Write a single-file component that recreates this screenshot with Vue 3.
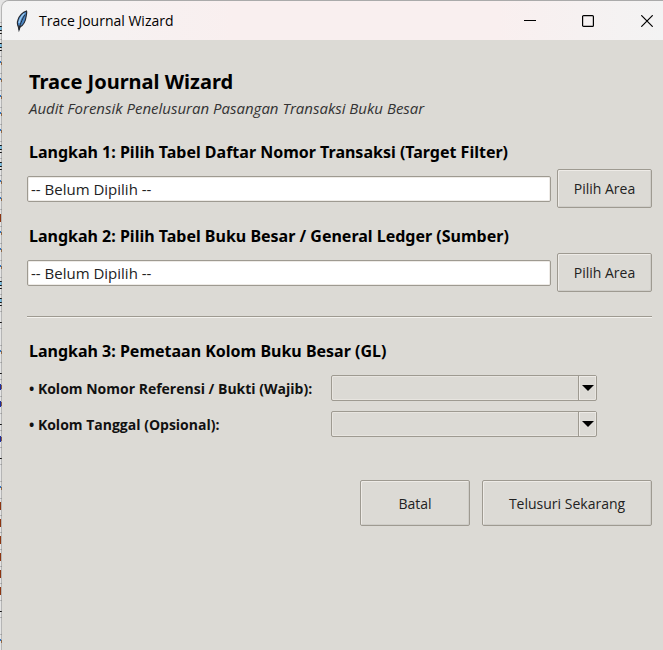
<script setup>
import { ref } from 'vue'

const sources = ref([
  { id: 'target', title: 'Langkah 1: Pilih Tabel Daftar Nomor Transaksi (Target Filter)', value: '-- Belum Dipilih --' },
  { id: 'ledger', title: 'Langkah 2: Pilih Tabel Buku Besar / General Ledger (Sumber)', value: '-- Belum Dipilih --' },
])

const columns = ref([
  { id: 'reference', label: '• Kolom Nomor Referensi / Bukti (Wajib):', value: '' },
  { id: 'date', label: '• Kolom Tanggal (Opsional):', value: '' },
])

// Edge of the sheet that shows behind the window
const gridLines = Array.from({ length: 37 }, (_, i) => 22 + i * 17)
const bars = [26, 43, 145, 162, 281, 298]
const hooks = [61, 78, 95, 112, 129, 180, 197, 231, 248, 265, 350, 486, 639]
const rings = [384, 401, 436]
const dashes = [322, 373, 424, 458, 611]
const reds = [214, 502, 519, 536, 553, 570, 587]
</script>

<template>
  <div class="desktop">
    <svg class="sheet" width="2" height="650" aria-hidden="true">
      <rect v-for="y in gridLines" :key="'g' + y" x="0" :y="y" width="2" height="1" fill="#b9b9b9" />
      <g v-for="y in bars" :key="'b' + y">
        <rect x="0" :y="y" width="2" height="1" fill="#111" />
        <rect x="0" :y="y + 1" width="2" height="3" fill="#7cc4ea" />
        <rect x="0" :y="y + 4" width="2" height="1" fill="#111" />
        <rect x="0" :y="y + 7" width="2" height="1" fill="#111" />
      </g>
      <g v-for="y in hooks" :key="'h' + y">
        <rect x="0" :y="y" width="1" height="2" fill="#2f75c0" />
        <rect x="1" :y="y + 1" width="1" height="3" fill="#a8642a" />
      </g>
      <g v-for="y in rings" :key="'r' + y">
        <rect x="0" :y="y" width="1" height="6" fill="#1e2fa0" />
        <rect x="1" :y="y + 1" width="1" height="4" fill="#8a4a30" />
      </g>
      <rect v-for="y in dashes" :key="'d' + y" x="0" :y="y" width="2" height="1" fill="#111" />
      <rect v-for="y in reds" :key="'k' + y" x="0" :y="y" width="1" height="8" fill="#8d3510" />
    </svg>

    <main class="window">
      <header class="titlebar">
        <svg class="feather" width="14" height="22" viewBox="0 0 14 22" aria-hidden="true">
          <path d="M11.500 1C8 2 3.800 6 2.800 10.500C2 13 2.400 15 3.400 17L4 20L5 17C9 15 10.700 10 11.200 6C11.500 4 12 2.500 11.500 1Z" fill="#4a86c5" stroke="#262b33" stroke-width="1.200" />
          <path d="M9.500 3.500C6.500 6 4.800 9 4 13" fill="none" stroke="#9fcdf2" stroke-width="1.500" />
          <path d="M10 4.500C8 8 5.500 12 4.200 19.500" fill="none" stroke="#1d2632" stroke-width="1" />
          <path d="M3.500 15L4 20L5.500 16.500Z" fill="#2a2a2a" />
        </svg>
        <span class="caption">Trace Journal Wizard</span>
        <div class="controls">
          <button type="button" aria-label="Minimize">
            <svg width="12" height="12" viewBox="0 0 12 12"><path d="M0 5.500H12" /></svg>
          </button>
          <button type="button" aria-label="Maximize">
            <svg width="12" height="12" viewBox="0 0 12 12"><rect x=".6" y=".6" width="10.800" height="10.800" rx="1" /></svg>
          </button>
          <button type="button" aria-label="Close">
            <svg width="12" height="12" viewBox="0 0 12 12"><path d="M.3 .3L11.700 11.700M11.700 .3L.3 11.700" /></svg>
          </button>
        </div>
      </header>

      <form class="content" @submit.prevent>
        <h1>Trace Journal Wizard</h1>
        <p class="subtitle">Audit Forensik Penelusuran Pasangan Transaksi Buku Besar</p>

        <section v-for="s in sources" :key="s.id" class="step">
          <label class="heading" :for="s.id">{{ s.title }}</label>
          <div class="picker">
            <input :id="s.id" v-model="s.value" type="text" readonly />
            <button type="button" class="btn">Pilih Area</button>
          </div>
        </section>

        <hr />

        <h2 class="heading">Langkah 3: Pemetaan Kolom Buku Besar (GL)</h2>
        <div class="mapping">
          <template v-for="c in columns" :key="c.id">
            <label :for="c.id">{{ c.label }}</label>
            <span class="combo">
              <select :id="c.id" v-model="c.value">
                <option value=""></option>
              </select>
              <span class="arrow" aria-hidden="true">
                <svg width="12" height="6" viewBox="0 0 12 6"><path d="M0 0H12L6 6Z" /></svg>
              </span>
            </span>
          </template>
        </div>

        <footer class="actions">
          <button type="button" class="btn cancel">Batal</button>
          <button type="submit" class="btn primary">Telusuri Sekarang</button>
        </footer>
      </form>
    </main>
  </div>
</template>

<style>
body {
  margin: 0;
  background: #e4e4e4;
}
</style>

<style scoped>
.desktop {
  display: grid;
  grid-template-columns: 2px 1fr;
  min-height: 100vh;
  overflow: hidden;
  background: #e4e4e4;
  font-family: "Open Sans", "Noto Sans", sans-serif;
  font-size: 14px;
  color: #000;
}
.sheet {
  display: block;
}
.window {
  display: flex;
  flex-direction: column;
  border-top: 1px solid #aaa;
  border-left: 1px solid rgba(110, 110, 110, 0.4);
  margin-left: -1px;
  border-top-left-radius: 8px;
  background: #dcdad5;
  background-clip: padding-box;
  overflow: hidden;
}
.titlebar {
  display: flex;
  align-items: center;
  height: 39px;
  padding-left: 13px;
  background: linear-gradient(90deg, #f3f3f3, #f9efef 35%, #f9efef 75%, #f3f3f3);
}
.feather {
  margin-right: 10px;
}
.caption {
  flex: 1;
  font-size: 14px;
}
.controls {
  display: flex;
}
.controls button {
  display: grid;
  place-items: center;
  width: 58px;
  height: 39px;
  padding: 0;
  border: 0;
  background: none;
}
.controls button:last-child {
  padding-left: 2px;
  margin-right: -12px;
}
.controls svg {
  fill: none;
  stroke: #000;
  stroke-width: 1.2;
}
.content {
  padding: 30px 11px 24px 25px;
}
h1 {
  margin: 0;
  padding-left: 2px;
  font-family: "Noto Sans", "Open Sans", sans-serif;
  font-size: 20px;
  line-height: 24px;
}
.subtitle {
  margin: 0 0 18px;
  padding-left: 2px;
  font-size: 15px;
  line-height: 28px;
  font-style: italic;
  color: #333;
}
.heading {
  display: block;
  margin: 0;
  padding-left: 2px;
  font-family: "Noto Sans", "Open Sans", sans-serif;
  font-size: 16px;
  line-height: 24px;
  font-weight: 700;
}
.step {
  margin-bottom: 16px;
}
.step .heading {
  margin-bottom: 5px;
}
.picker {
  display: flex;
  align-items: center;
  gap: 6px;
}
input,
select,
.btn {
  box-sizing: border-box;
  border: 1px solid #9e9a91;
  border-radius: 2px;
  font: inherit;
  color: #222;
  outline: none;
}
input {
  flex: 1;
  min-width: 0;
  height: 26px;
  padding: 0 3px;
  background: #fff;
  font-size: 15px;
  box-shadow: inset 0 0 0 1px #eeebe7;
}
.btn {
  height: 39px;
  padding: 0;
  background: #dcdad5;
  box-shadow: inset 1px 1px 0 #eeebe7, inset -1px -1px 0 #cfcdc8;
}
.picker .btn {
  width: 95px;
}
hr {
  height: 1px;
  margin: 24px 0 21px;
  border: 0;
  border-top: 1px solid #9e9a91;
  background: #f4f2ee;
}
.mapping {
  display: grid;
  grid-template-columns: 304px minmax(0, 266px);
  align-items: center;
  row-gap: 10px;
  margin-top: 12px;
}
.mapping label {
  padding-left: 2px;
  font-weight: 700;
  color: #111;
  white-space: nowrap;
}
.combo {
  position: relative;
  display: flex;
}
select {
  appearance: none;
  width: 100%;
  height: 26px;
  padding: 0 22px 0 4px;
  background: #dcdad5;
  box-shadow: inset 0 0 0 1px #e8e5e0;
}
.arrow {
  position: absolute;
  inset: 1px 1px 1px auto;
  display: grid;
  place-items: center;
  width: 17px;
  border-left: 1px solid #9e9a91;
  box-shadow: inset 1px 1px 0 #eeebe7;
  pointer-events: none;
}
.actions {
  display: flex;
  justify-content: flex-end;
  gap: 12px;
  margin-top: 43px;
}
.actions .btn {
  height: 46px;
}
.cancel {
  width: 110px;
}
.primary {
  width: 170px;
}
</style>
